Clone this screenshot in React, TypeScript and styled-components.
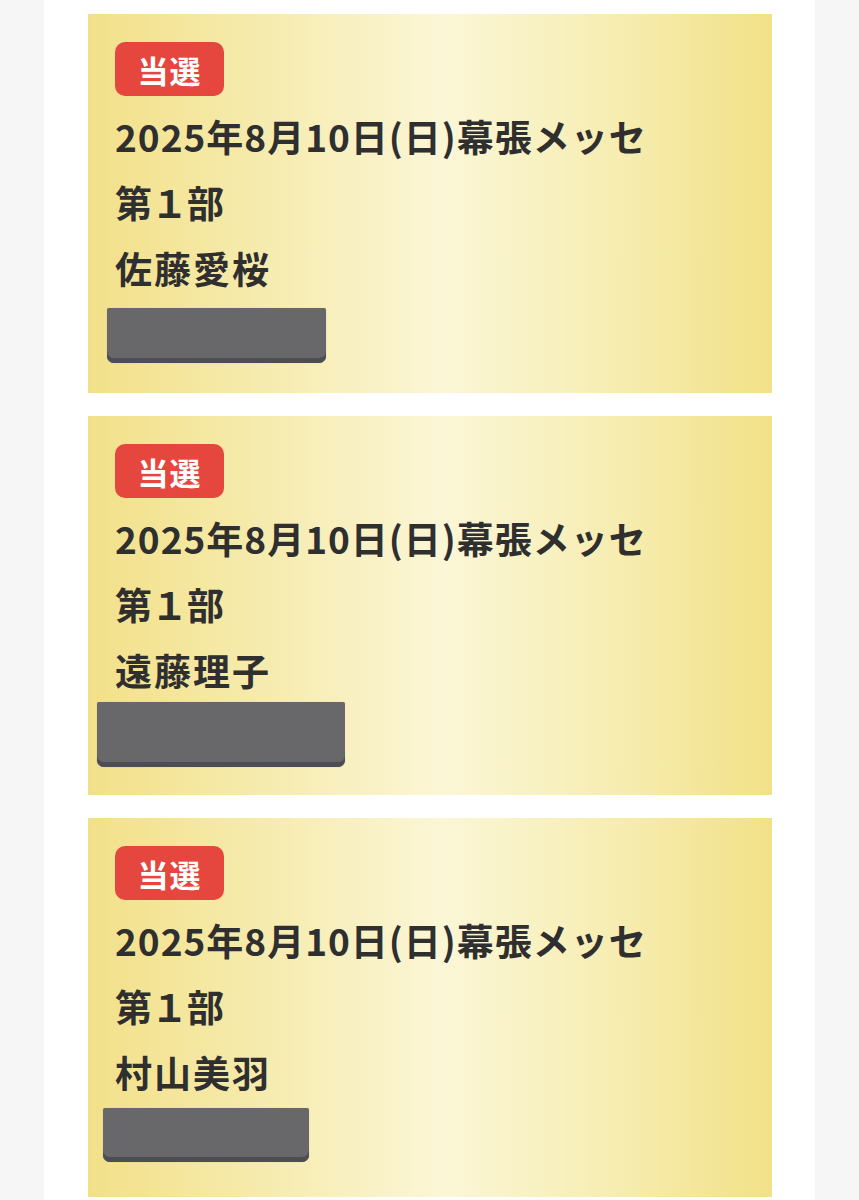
import styled, { createGlobalStyle } from 'styled-components'

const GlobalStyle = createGlobalStyle`
  html, body {
    margin: 0;
    padding: 0;
    background: #f6f6f6;
  }
  body {
    font-family: "Noto Sans CJK JP", "Noto Sans", sans-serif;
  }
`

const Page = styled.div`
  width: 771px;
  min-height: 1200px;
  margin-left: 44px;
  background: #ffffff;
  padding: 14px 43px 0 44px;
  box-sizing: border-box;
  display: flex;
  flex-direction: column;
  gap: 23px;
`

const Card = styled.section`
  height: 379px;
  box-sizing: border-box;
  padding: 28px 27px 0 27px;
  background: linear-gradient(
    90deg,
    #f2e089 0%,
    #f6ebad 25%,
    #fbf6d6 52%,
    #f7eeb5 75%,
    #f1e188 100%
  );
  display: flex;
  flex-direction: column;
  align-items: flex-start;
`

const Badge = styled.span`
  display: inline-flex;
  align-items: center;
  justify-content: center;
  width: 109px;
  height: 54px;
  border-radius: 10px;
  background: #e5473f;
  color: #ffffff;
  font-size: 31px;
  font-weight: 700;
  letter-spacing: 1px;
  margin-bottom: 7px;
`

const Line = styled.div<{ $spacing?: number }>`
  height: 66px;
  line-height: 66px;
  font-size: 37px;
  font-weight: 700;
  letter-spacing: ${p => p.$spacing ?? 1}px;
  color: #2f2f2f;
  white-space: nowrap;
`

const Redacted = styled.div<{ $left: number; $top: number; $w: number; $h: number }>`
  margin-left: ${p => p.$left}px;
  margin-top: ${p => p.$top}px;
  width: ${p => p.$w}px;
  height: ${p => p.$h}px;
  background: #68686a;
  border-radius: 2px 2px 7px 7px;
  box-shadow: inset 0 -5px 0 #4d4e55, 0 0 1px rgba(0, 0, 0, 0.25);
`

const entries = [
  { name: '佐藤愛桜', box: { left: -8, top: 7, w: 219, h: 55 } },
  { name: '遠藤理子', box: { left: -18, top: -1, w: 248, h: 65 } },
  { name: '村山美羽', box: { left: -12, top: 3, w: 206, h: 54 } },
]

export default function App() {
  return (
    <>
      <GlobalStyle />
      <Page>
        {entries.map(e => (
          <Card key={e.name}>
            <Badge>当選</Badge>
            <Line>2025年8月10日(日)幕張メッセ</Line>
            <Line $spacing={-1}>第１部</Line>
            <Line $spacing={2}>{e.name}</Line>
            <Redacted $left={e.box.left} $top={e.box.top} $w={e.box.w} $h={e.box.h} />
          </Card>
        ))}
      </Page>
    </>
  )
}
